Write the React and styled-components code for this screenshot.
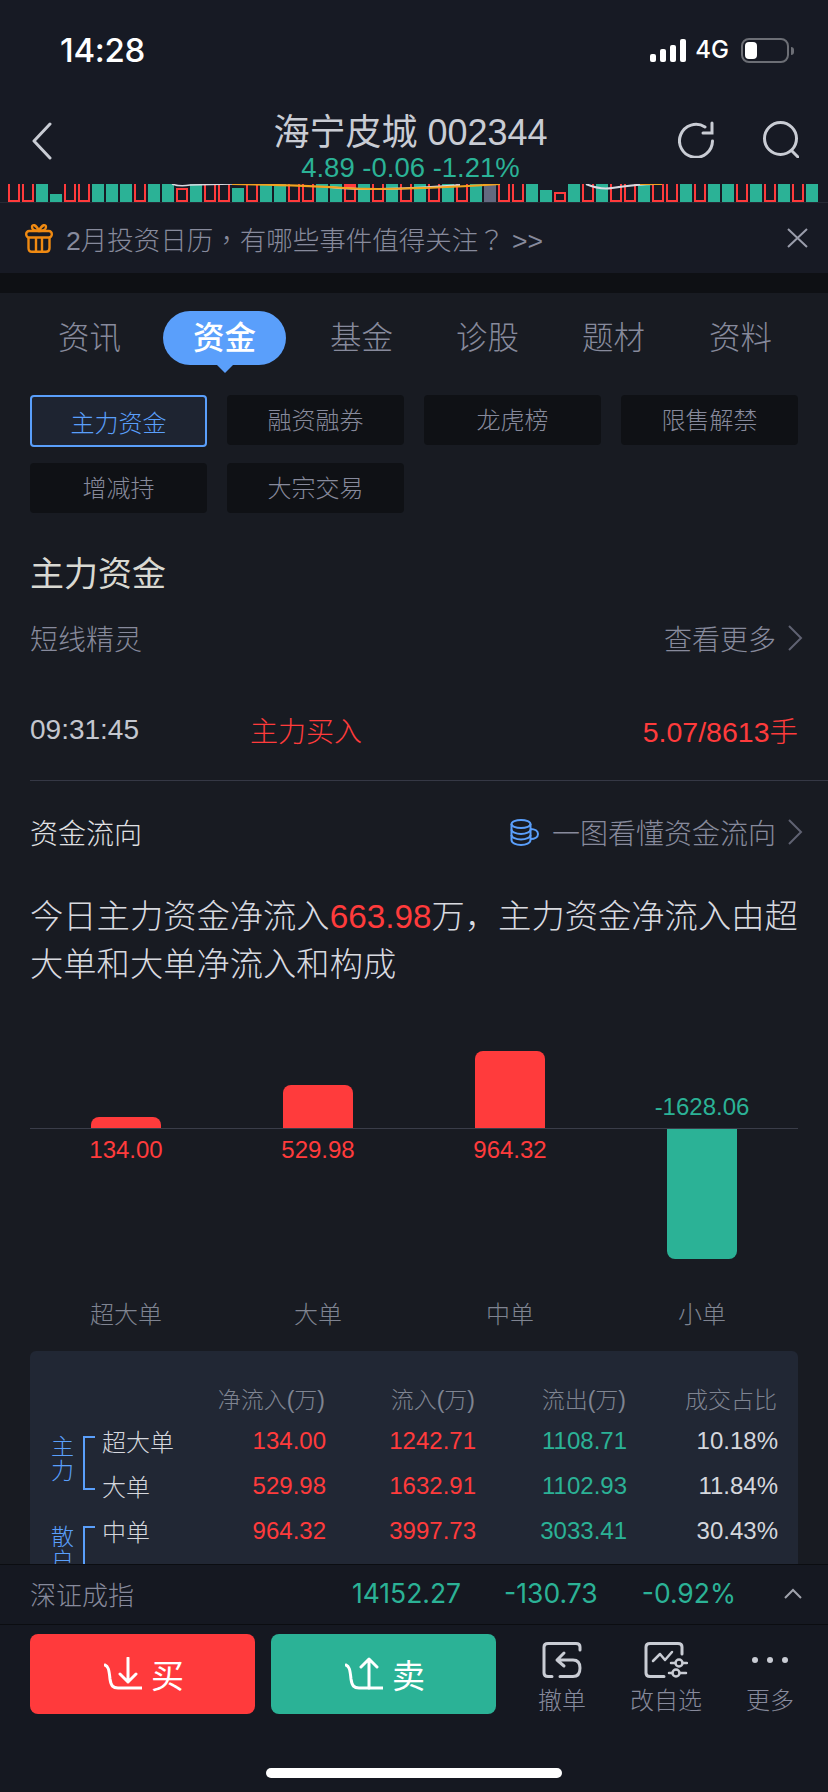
import React from "react";
import styled, { createGlobalStyle, css } from "styled-components";

const RED = "#ff3b3c";
const GREEN = "#2bb296";
const BLUE = "#5a9ffb";
const MUTED = "#878a9c";
const FONT = `"Liberation Sans", "Noto Sans CJK SC", sans-serif`;

const Global = createGlobalStyle`
  html, body { margin: 0; padding: 0; background: #181b22; }
  * { box-sizing: border-box; }
  body { font-family: ${FONT}; font-weight: 300; }
`;

const Page = styled.div`
  width: 828px; height: 1792px; display: flex; flex-direction: column;
  overflow: hidden; background: #181b22; color: #d8dae0;
`;
const Main = styled.main`flex: 1; min-height: 0; overflow: hidden;`;
const Top = styled.header`background: #171a24;`;

const StatusBar = styled.div`
  height: 100px; display: flex; align-items: center; padding: 0 39px 0 60px;
  justify-content: space-between;
`;
const Clock = styled.div`font: 500 33px/40px Inter, sans-serif; color: #fff; letter-spacing: -0.3px;`;
const StatusRight = styled.div`display: flex; align-items: center;`;
const Signal = styled.div`display: flex; align-items: flex-end; gap: 3.5px; height: 23px;`;
const SignalBar = styled.span`width: 6.5px; height: ${p => p.$h}px; background: #fff; border-radius: 2px;`;
const Net = styled.span`font: 500 24px/30px Inter, sans-serif; color: #fff; margin: 0 12px 0 9px;`;
const Battery = styled.div`
  position: relative; width: 48px; height: 25px; border: 2px solid #6c6e75; border-radius: 8px; padding: 2px;
  &::after { content: ""; position: absolute; right: -7px; top: 7px; width: 3px; height: 8px; background: #6c6e75; border-radius: 0 3px 3px 0; }
`;
const BatteryFill = styled.div`width: 12px; height: 100%; background: #fff; border-radius: 4px;`;

const NavBar = styled.div`
  height: 84px; display: grid; grid-template-columns: 1fr auto 1fr; padding: 0 29px 0 22px;
`;
const NavLeft = styled.div`padding: 22px 0 0 9px;`;
const NavCenter = styled.div`text-align: center; padding-top: 13px;`;
const NavTitle = styled.div`font-size: 36px; line-height: 40px; color: #c9ccd4; font-weight: 400;`;
const NavPrice = styled.div`font-size: 27.5px; line-height: 30px; color: ${GREEN};`;
const NavRight = styled.div`display: flex; justify-content: flex-end; gap: 49px; padding-top: 21px;`;

const KLineWrap = styled.div`
  position: relative; height: 19px; border-bottom: 1px solid #262a35;
`;
const KBars = styled.div`display: flex; align-items: flex-end; gap: 2px; padding-left: 8px; height: 18px;`;
const KBar = styled.span`
  width: 12px; height: ${p => p.$h}px; flex: none;
  ${p => p.$kind === "g" && css`background: ${GREEN};`}
  ${p => p.$kind === "x" && css`background: #63697f;`}
  ${p => p.$kind === "u" && css`border: 2px solid ${RED}; border-top: 0;`}
  ${p => p.$kind === "b" && css`border: 2px solid ${RED};`}
`;
const KOverlay = styled.svg`position: absolute; left: 0; top: 0;`;

const Banner = styled.div`
  height: 70px; display: flex; align-items: center; padding: 0 20px 0 25px; background: #171a24;
`;
const BannerText = styled.span`font-size: 26.5px; color: ${MUTED}; margin-left: 13px; flex: 1; white-space: nowrap;`;
const Punct = styled.span`font-family: "Noto Sans CJK TC", sans-serif;`;
const Stripe = styled.div`height: 20px; background: #0e1014;`;

const Tabs = styled.nav`display: flex; align-items: center; padding: 18px 0 30px 58px;`;
const Tab = styled.div`
  position: relative; font-size: 31.5px; line-height: 54px; color: ${MUTED}; flex: none;
  margin-left: ${p => p.$ml}px;
  ${p => p.$active && css`
    width: 123px; text-align: center; background: ${BLUE}; color: #fff; font-weight: 500; border-radius: 27px;
    &::after {
      content: ""; position: absolute; left: 50%; top: 54px; margin-left: -8px;
      border: 8px solid transparent; border-top-color: ${BLUE}; border-bottom: 0;
    }
  `}
`;

const SubTabs = styled.div`
  display: grid; grid-template-columns: repeat(4, 177px); column-gap: 20px; row-gap: 16px; padding: 0 30px; align-items: start;
`;
const SubTab = styled.div`
  height: ${p => (p.$active ? 52 : 50)}px; display: flex; align-items: center; justify-content: center;
  font-size: 24px; border-radius: 4px;
  background: ${p => (p.$active ? "#1e2431" : "#0f1115")};
  color: ${p => (p.$active ? BLUE : MUTED)};
  border: ${p => (p.$active ? `2px solid ${BLUE}` : "0")};
  padding-bottom: ${p => (p.$active ? 0 : 3)}px;
`;

const Section = styled.section`padding: ${p => p.$pt}px 30px 0;`;
const Heading = styled.h2`margin: 0; font-size: 34px; line-height: 40px; font-weight: 400; color: #d9d9d2;`;
const SplitRow = styled.div`
  display: flex; align-items: center; justify-content: space-between; height: 40px; margin-top: ${p => p.$mt || 0}px;
  font-size: 28px; color: ${p => p.$color || MUTED};
`;
const LinkSide = styled.div`display: flex; align-items: center; color: ${MUTED};`;
const Chevron = styled.svg`margin-left: 11px; margin-right: -5px;`;
const DbIcon = styled.svg`margin-right: 13px;`;
const SignalRow = styled.div`
  display: grid; grid-template-columns: 220px 1fr auto; align-items: center; height: 40px; margin-top: 51px; font-size: 28.5px; color: ${RED};
`;
const SignalLabel = styled.span`font-size: 28px;`;
const SignalTime = styled.span`font-size: 28px; color: #c4c7cf;`;
const Divider = styled.hr`margin: 31px 0 0 30px; border: 0; height: 1px; background: #353845;`;
const FlowTitle = styled.span`color: #e0e1e4;`;
const Summary = styled.p`margin: 41px 0 0; font-size: 33.3px; line-height: 48px; color: #d8dae0;`;
const Hi = styled.span`color: ${RED};`;

const Chart = styled.div`display: grid; grid-template-columns: repeat(4, 1fr); margin-top: 51px;`;
const ChartCol = styled.div`display: flex; flex-direction: column; align-items: stretch;`;
const AboveZone = styled.div`
  height: 89px; display: flex; flex-direction: column; align-items: center; justify-content: flex-end;
  border-bottom: 1px solid #3a3d49;
`;
const BelowZone = styled.div`height: 166px; display: flex; flex-direction: column; align-items: center;`;
const UpBar = styled.div`width: 70px; height: ${p => p.$h}px; background: ${RED}; border-radius: 8px 8px 0 0;`;
const DownBar = styled.div`width: 70px; height: ${p => p.$h}px; background: ${GREEN}; border-radius: 0 0 8px 8px;`;
const ChartValue = styled.div`font-size: 24px; line-height: 30px; color: ${p => p.$color}; margin: ${p => p.$m};`;
const ChartCat = styled.div`height: 40px; font-size: 24px; line-height: 40px; color: #7f8491; text-align: center;`;

const Card = styled.div`margin-top: 16px; background: #212734; border-radius: 6px 6px 0 0; padding: 30px 21px 0 0; height: 320px;`;
const cols = css`
  display: grid; grid-template-columns: 122px 102px 150px 151px 151px; align-items: center; text-align: right; white-space: nowrap;
  & > span { justify-self: end; }
  & > span:first-child { justify-self: start; }
`;
const TableHead = styled.div`${cols} padding-left: 71px; height: 32px; margin-bottom: 5px; font-size: 23px; color: #7f8491;`;
const Group = styled.div`display: flex; align-items: center; padding-left: 21px; min-height: 90px;`;
const GroupLabel = styled.div`width: 22px; font-size: 23px; line-height: 24px; color: ${BLUE}; text-align: center; margin-bottom: 8px;`;
const Bracket = styled.div`
  width: 12px; height: 54px; margin: 0 7px 0 10px; flex: none;
  border: 2px solid ${BLUE}; border-right: 0;
`;
const GroupRows = styled.div`flex: 1; align-self: flex-start;`;
const Row = styled.div`${cols} height: 45px; font-size: 24px;`;
const RowName = styled.span`text-align: left; color: #d5d7dd;`;
const Cell = styled.span`color: ${p => p.$color || "#d5d7dd"};`;

const Footer = styled.footer`flex: none; height: 228px; background: #151821;`;
const IndexBar = styled.div`
  height: 61px; display: flex; align-items: center; padding: 0 26px 3px 30px;
  border-top: 1px solid #0b0d11; border-bottom: 1px solid #0b0d11;
`;
const IndexName = styled.span`color: ${MUTED}; font-size: 26px; flex: 1;`;
const IndexValue = styled.span`font: 400 26.5px Inter, sans-serif; color: ${GREEN}; margin-right: ${p => p.$mr}px;`;
const Actions = styled.div`display: flex; padding: 9px 0 0 30px;`;
const Trade = styled.button`
  width: 225px; height: 80px; margin-right: ${p => p.$mr}px; border: 0; border-radius: 8px; padding: 0 0 0 3px;
  background: ${p => p.$bg}; color: #fff; font: 400 33px ${FONT};
  display: flex; align-items: center; justify-content: center; gap: 9px;
`;
const Tool = styled.div`
  width: 104px; display: flex; flex-direction: column; align-items: center; font-size: 24px; color: ${MUTED}; padding-top: 8px;
`;
const ToolIcon = styled.div`height: 36px; display: flex; align-items: center; justify-content: center; margin-bottom: 3px;`;
const Dots = styled.div`display: flex; gap: 9px;`;
const Dot = styled.span`width: 6px; height: 6px; border-radius: 50%; background: #c9ccd4;`;
const HomeBar = styled.div`width: 296px; height: 10px; margin: 52px auto 0; background: #fff; border-radius: 5px;`;

const bars = "u u g s4 u u g g g u g g b g u u s7 u g g u u g g u g u g u g u g u g x u u g s6 B g u g u u g u u g u g g u g u g u g".split(" ");
const barProps = k => {
  if (k === "s4") return { $kind: "g", $h: 8 };
  if (k === "s7") return { $kind: "g", $h: 14 };
  if (k === "s6") return { $kind: "g", $h: 12 };
  if (k === "b") return { $kind: "b", $h: 14 };
  if (k === "B") return { $kind: "b", $h: 10 };
  return { $kind: k, $h: 18 };
};

const rowsMain = [
  ["超大单", "134.00", "1242.71", "1108.71", "10.18%"],
  ["大单", "529.98", "1632.91", "1102.93", "11.84%"],
];
const rowsRetail = [["中单", "964.32", "3997.73", "3033.41", "30.43%"]];

const TableRow = ({ r }) => (
  <Row>
    <RowName>{r[0]}</RowName>
    <Cell $color={RED}>{r[1]}</Cell>
    <Cell $color={RED}>{r[2]}</Cell>
    <Cell $color={GREEN}>{r[3]}</Cell>
    <Cell>{r[4]}</Cell>
  </Row>
);

const Hook = () => <path d="M1 8C4 9 5 12 6 22C7 29 9 31 14 31H38" />;

export default function App() {
  return (
    <Page>
      <Global />
      <Main>
        <Top>
          <StatusBar>
            <Clock>14:28</Clock>
            <StatusRight>
              <Signal>
                {[8, 13, 17, 23].map(h => <SignalBar key={h} $h={h} />)}
              </Signal>
              <Net>4G</Net>
              <Battery><BatteryFill /></Battery>
            </StatusRight>
          </StatusBar>
          <NavBar>
            <NavLeft>
              <svg width="22" height="38" viewBox="0 0 22 38" fill="none" stroke="#c9ccd4" strokeWidth="3" strokeLinecap="round" strokeLinejoin="round">
                <path d="M19 2L3 19L19 36" />
              </svg>
            </NavLeft>
            <NavCenter>
              <NavTitle>海宁皮城 002344</NavTitle>
              <NavPrice>4.89 -0.06 -1.21%</NavPrice>
            </NavCenter>
            <NavRight>
              <svg width="36" height="37" viewBox="0 0 36 37" fill="none" stroke="#c9ccd4" strokeWidth="3" strokeLinecap="round">
                <path d="M27 6A16.5 16.5 0 1 0 34.5 20" />
                <path d="M34 2V12H25" />
              </svg>
              <svg width="36" height="37" viewBox="0 0 36 37" fill="none" stroke="#c9ccd4" strokeWidth="3" strokeLinecap="round">
                <circle cx="17.5" cy="17.5" r="16" />
                <path d="M29 30L35 36" />
              </svg>
            </NavRight>
          </NavBar>
          <KLineWrap>
            <KBars>
              {bars.map((k, i) => <KBar key={i} {...barProps(k)} />)}
            </KBars>
            <KOverlay width="828" height="19" viewBox="0 0 828 19" fill="none">
              <rect x="344" y="0" width="12" height="4" fill={RED} />
              <path d="M172 0Q180 3 190 1L232 0" stroke="#d8dae0" strokeWidth="1.5" />
              <path d="M330 3Q370 8 460 1" stroke="#d8dae0" strokeWidth="2" />
              <path d="M232 0Q300 1 345 4Q390 7 500 0" stroke="#f2a31f" strokeWidth="2" />
              <path d="M586 0Q600 6 612 4Q640 0 655 0" stroke="#d8dae0" strokeWidth="2" />
              <path d="M640 0H662" stroke="#f2a31f" strokeWidth="2" />
            </KOverlay>
          </KLineWrap>
          <Banner>
            <svg width="28" height="30" viewBox="0 0 28 30" fill="none" stroke="#f08a12" strokeWidth="2.4" strokeLinejoin="round">
              <path d="M14 8C10 8 7 7 7 4C7 1 11 1 14 8C17 1 21 1 21 4C21 7 18 8 14 8Z" />
              <rect x="1.2" y="8" width="25.6" height="6.5" rx="3" />
              <path d="M3.5 14.5V25Q3.5 28.8 7 28.8H21Q24.5 28.8 24.5 25V14.5M11 14.5V28.8M17 14.5V28.8" />
            </svg>
            <BannerText>2月投资日历<Punct>，</Punct>有哪些事件值得关注<Punct>？</Punct> &gt;&gt;</BannerText>
            <svg width="21" height="20" viewBox="0 0 21 20" fill="none" stroke="#9a9dab" strokeWidth="2">
              <path d="M1 1L20 19M20 1L1 19" />
            </svg>
          </Banner>
        </Top>
        <Stripe />
        <Tabs>
          <Tab $ml={0}>资讯</Tab>
          <Tab $ml={42} $active>资金</Tab>
          <Tab $ml={44}>基金</Tab>
          <Tab $ml={63}>诊股</Tab>
          <Tab $ml={63}>题材</Tab>
          <Tab $ml={64}>资料</Tab>
        </Tabs>
        <SubTabs>
          <SubTab $active>主力资金</SubTab>
          <SubTab>融资融券</SubTab>
          <SubTab>龙虎榜</SubTab>
          <SubTab>限售解禁</SubTab>
          <SubTab>增减持</SubTab>
          <SubTab>大宗交易</SubTab>
        </SubTabs>
        <Section $pt={41}>
          <Heading>主力资金</Heading>
          <SplitRow $mt={24}>
            <span>短线精灵</span>
            <LinkSide>
              查看更多
              <Chevron width="16" height="26" viewBox="0 0 16 26" fill="none" stroke="#5f6272" strokeWidth="2"><path d="M2 1L14 13L2 25" /></Chevron>
            </LinkSide>
          </SplitRow>
          <SignalRow>
            <SignalTime>09:31:45</SignalTime>
            <SignalLabel>主力买入</SignalLabel>
            <span>5.07/8613手</span>
          </SignalRow>
        </Section>
        <Divider />
        <Section $pt={31}>
          <SplitRow>
            <FlowTitle>资金流向</FlowTitle>
            <LinkSide>
              <DbIcon width="29" height="27" viewBox="0 0 29 27" fill="none" stroke={BLUE} strokeWidth="2">
                <ellipse cx="11" cy="5" rx="9.5" ry="4" />
                <path d="M1.5 5V21C1.5 24 6 26 11 26C16 26 20.5 24 20.5 21V5" />
                <path d="M1.5 10.5C1.5 13 6 15 11 15C16 15 20.5 13 20.5 10.5M1.5 16C1.5 18.5 6 20.5 11 20.5C16 20.5 20.5 18.5 20.5 16" />
                <path d="M20.5 10C25 10 28 12 28 15C28 18 25 20 20.5 20" />
              </DbIcon>
              一图看懂资金流向
              <Chevron width="16" height="26" viewBox="0 0 16 26" fill="none" stroke="#5f6272" strokeWidth="2"><path d="M2 1L14 13L2 25" /></Chevron>
            </LinkSide>
          </SplitRow>
          <Summary>今日主力资金净流入<Hi>663.98</Hi>万，主力资金净流入由超大单和大单净流入和构成</Summary>
          <Chart>
            <ChartCol>
              <AboveZone><UpBar $h={11} /></AboveZone>
              <BelowZone><ChartValue $color={RED} $m="6px 0 0">134.00</ChartValue></BelowZone>
              <ChartCat>超大单</ChartCat>
            </ChartCol>
            <ChartCol>
              <AboveZone><UpBar $h={43} /></AboveZone>
              <BelowZone><ChartValue $color={RED} $m="6px 0 0">529.98</ChartValue></BelowZone>
              <ChartCat>大单</ChartCat>
            </ChartCol>
            <ChartCol>
              <AboveZone><UpBar $h={77} /></AboveZone>
              <BelowZone><ChartValue $color={RED} $m="6px 0 0">964.32</ChartValue></BelowZone>
              <ChartCat>中单</ChartCat>
            </ChartCol>
            <ChartCol>
              <AboveZone><ChartValue $color={GREEN} $m="0 0 6px">-1628.06</ChartValue></AboveZone>
              <BelowZone><DownBar $h={130} /></BelowZone>
              <ChartCat>小单</ChartCat>
            </ChartCol>
          </Chart>
          <Card>
            <TableHead>
              <span />
              <span>净流入(万)</span>
              <span>流入(万)</span>
              <span>流出(万)</span>
              <span>成交占比</span>
            </TableHead>
            <Group>
              <GroupLabel>主力</GroupLabel>
              <Bracket />
              <GroupRows>{rowsMain.map(r => <TableRow key={r[0]} r={r} />)}</GroupRows>
            </Group>
            <Group>
              <GroupLabel>散户</GroupLabel>
              <Bracket />
              <GroupRows>{rowsRetail.map(r => <TableRow key={r[0]} r={r} />)}</GroupRows>
            </Group>
          </Card>
        </Section>
      </Main>
      <Footer>
        <IndexBar>
          <IndexName>深证成指</IndexName>
          <IndexValue $mr={43}>14152.27</IndexValue>
          <IndexValue $mr={44}>-130.73</IndexValue>
          <IndexValue $mr={48}>-0.92%</IndexValue>
          <svg width="18" height="11" viewBox="0 0 18 11" fill="none" stroke="#a0a3ad" strokeWidth="2"><path d="M1 10L9 2L17 10" /></svg>
        </IndexBar>
        <Actions>
          <Trade $bg="#ff3a3c" $mr={16}>
            <svg width="38" height="34" viewBox="0 0 38 34" fill="none" stroke="#fff" strokeWidth="3" strokeLinecap="round" strokeLinejoin="round">
              <Hook />
              <path d="M24 1V25M16 17L24 25L32 17" />
            </svg>
            买
          </Trade>
          <Trade $bg="#2bb296" $mr={14}>
            <svg width="38" height="34" viewBox="0 0 38 34" fill="none" stroke="#fff" strokeWidth="3" strokeLinecap="round" strokeLinejoin="round">
              <Hook />
              <path d="M24 31V2M16 10L24 2L32 10" />
            </svg>
            卖
          </Trade>
          <Tool>
            <ToolIcon>
              <svg width="40" height="36" viewBox="0 0 40 36" fill="none" stroke="#c9ccd4" strokeWidth="3" strokeLinecap="round" strokeLinejoin="round">
                <path d="M38 8V5Q38 1.5 34 1.5H6Q2 1.5 2 5V31Q2 34.5 6 34.5H10" />
                <path d="M22 11L15 18L22 24M15 18H31Q38 18 38 26Q38 34.5 31 34.5H18" />
              </svg>
            </ToolIcon>
            撤单
          </Tool>
          <Tool>
            <ToolIcon>
              <svg width="44" height="36" viewBox="0 0 44 36" fill="none" stroke="#c9ccd4" strokeWidth="3" strokeLinecap="round" strokeLinejoin="round">
                <path d="M38 12V5Q38 1.5 34 1.5H6Q2 1.5 2 5V31Q2 34.5 6 34.5H20" />
                <path d="M9 19L16 12L21 18L28 10" strokeWidth="2.5" />
                <path d="M27 21H31M39 21H43M25 31H28M36 31H42" strokeWidth="2.5" />
                <circle cx="35" cy="21" r="3.5" strokeWidth="2.5" />
                <circle cx="32" cy="31" r="3.5" strokeWidth="2.5" />
              </svg>
            </ToolIcon>
            改自选
          </Tool>
          <Tool>
            <ToolIcon>
              <Dots><Dot /><Dot /><Dot /></Dots>
            </ToolIcon>
            更多
          </Tool>
        </Actions>
        <HomeBar />
      </Footer>
    </Page>
  );
}
